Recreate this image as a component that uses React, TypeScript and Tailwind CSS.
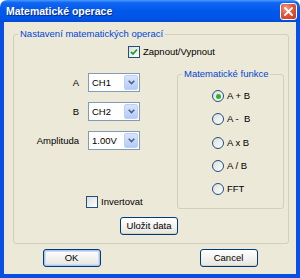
import React from 'react';

const ui = "font-['Liberation_Sans',Arial,sans-serif] text-[9.5px] leading-[12px] text-black";

function Combo({ value }: { value: string }) {
    return (
        <div className="flex h-[19px] w-[52px] items-stretch border border-[#7F9DB9] bg-white">
            <span className="flex-1 pl-[3px] leading-[17px]">{value}</span>
            <span className="m-px flex w-[14px] items-center justify-center rounded-[2px] border border-[#BCCFF6] bg-gradient-to-b from-[#DAE5FD] to-[#B4CAF7]">
                <svg width="7" height="5" viewBox="0 0 7 5">
                    <path d="M0.7 0.7 L3.5 3.5 L6.3 0.7" stroke="#4D6185" strokeWidth="1.6" fill="none" />
                </svg>
            </span>
        </div>
    );
}

function Check({ label, checked }: { label: string; checked?: boolean }) {
    return (
        <div className="flex items-center gap-[3px]">
            <span className="flex h-[12px] w-[12px] items-center justify-center border border-[#1C5180] bg-gradient-to-br from-[#DCDCD7] to-white">
                {checked && (
                    <svg width="8" height="8" viewBox="0 0 8 8">
                        <path d="M1 3.8 L3 6 L7 1.5" stroke="#21A121" strokeWidth="1.8" fill="none" />
                    </svg>
                )}
            </span>
            <span>{label}</span>
        </div>
    );
}

function Radio({ label, checked }: { label: string; checked?: boolean }) {
    return (
        <div className="flex items-center gap-[3px]">
            <span className="flex h-[12px] w-[12px] items-center justify-center rounded-full border border-[#1C5180] bg-gradient-to-br from-[#DCDCD7] to-white">
                {checked && <span className="h-[5px] w-[5px] rounded-full bg-[#2DB42D]" />}
            </span>
            <span className="whitespace-pre">{label}</span>
        </div>
    );
}

function XpButton({ label, primary }: { label: string; primary?: boolean }) {
    return (
        <div
            className={`flex h-[18px] w-[58px] items-center justify-center rounded-[3px] border border-[#003C74] bg-gradient-to-b from-white to-[#E6E5DE] ${
                primary ? 'shadow-[inset_0_0_0_1px_#A9C4F0,inset_0_0_0_2px_#CEDDF7]' : 'shadow-[inset_0_-1px_0_#D6D0C5]'
            }`}
        >
            {label}
        </div>
    );
}

export default function App() {
    return (
        <div className={`h-[278px] w-[300px] bg-white ${ui}`}>
            <div className="flex h-full flex-col overflow-hidden rounded-t-[7px]">
                {/* Title bar */}
                <div className="flex h-[22px] items-center justify-between bg-[linear-gradient(to_bottom,#4A9BFF_0%,#1166F2_12%,#0058EA_50%,#0054E6_85%,#0049D4_100%)] pl-[6px] pr-[3px]">
                    <span className="text-[10.5px] font-bold leading-[14px] text-white [text-shadow:1px_1px_0_#0A2A8C]">
                        Matematické operace
                    </span>
                    <div className="flex h-[17px] w-[17px] items-center justify-center rounded-[3px] border border-white bg-[radial-gradient(circle_at_35%_30%,#F0A08A_0%,#E0583E_45%,#C9391E_100%)]">
                        <svg width="9" height="9" viewBox="0 0 9 9">
                            <path d="M1 1 L8 8 M8 1 L1 8" stroke="white" strokeWidth="1.8" strokeLinecap="square" />
                        </svg>
                    </div>
                </div>

                {/* Client area */}
                <div className="flex flex-1 flex-col border-x-4 border-b-4 border-[#0A50E0] bg-[#ECE9D8]">
                    <fieldset className="ml-[9px] mr-[7px] mt-[6px] rounded-[3px] border border-[#D0D0BF] pb-[8px] pr-[4px]">
                        <legend className="ml-[4px] whitespace-nowrap px-[2px] text-[#0046D5]">Nastavení matematických operací</legend>

                        <div className="pl-[114px] pt-[6px]">
                            <Check label="Zapnout/Vypnout" checked />
                        </div>

                        <div className="mt-[10px] flex">
                            <div className="flex w-[163px] flex-col pt-[5px]">
                                <div className="flex flex-col gap-[10px]">
                                    {[
                                        ['A', 'CH1'],
                                        ['B', 'CH2'],
                                        ['Amplituda', '1.00V'],
                                    ].map(([l, v]) => (
                                        <div key={l} className="flex items-center">
                                            <span className="w-[65px] text-right">{l}</span>
                                            <span className="ml-[9px]">
                                                <Combo value={v} />
                                            </span>
                                        </div>
                                    ))}
                                </div>
                                <div className="mt-[46px] pl-[72px]">
                                    <Check label="Invertovat" />
                                </div>
                            </div>

                            <fieldset className="w-[107px] rounded-[3px] border border-[#D0D0BF] pb-[13px] pt-[10px]">
                                <legend className="ml-[4px] whitespace-nowrap px-[2px] text-[#0046D5]">Matematické funkce</legend>
                                <div className="flex flex-col gap-[11.25px] pl-[34px]">
                                    <Radio label="A + B" checked />
                                    <Radio label="A -  B" />
                                    <Radio label="A x B" />
                                    <Radio label="A / B" />
                                    <Radio label="FFT" />
                                </div>
                            </fieldset>
                        </div>

                        <div className="mt-[8px] flex justify-center">
                            <XpButton label="Uložit data" />
                        </div>
                    </fieldset>

                    <div className="mt-[5px] flex justify-center gap-[99px]">
                        <XpButton label="OK" primary />
                        <XpButton label="Cancel" />
                    </div>
                </div>
            </div>
        </div>
    );
}
